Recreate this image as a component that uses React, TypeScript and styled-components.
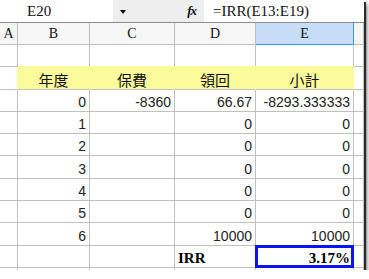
import React from "react";
import styled, { createGlobalStyle, css } from "styled-components";

const GlobalStyle = createGlobalStyle`
  html, body {
    margin: 0;
    padding: 0;
    background: #ffffff;
  }
`;

const GRID = "#c0c0c0";
const YELLOW = "#fbfb9c";
const SERIF = `"Liberation Serif", "DejaVu Serif", "Times New Roman", serif`;

const Frame = styled.div`
  width: 364px;
  height: 270px;
  overflow: hidden;
  display: flex;
  flex-direction: column;
  background: #fff;
  box-shadow: 2px 2px 1px rgba(0, 0, 0, 0.75), 4px 4px 4px rgba(0, 0, 0, 0.35);
`;

// formula bar
const FormulaBar = styled.div`
  display: flex;
  height: 22px;
  flex: none;
  border-bottom: 1px solid #8c8c8c;
  font-family: ${SERIF};
  font-size: 15px;
  color: #111;
`;

const NameBox = styled.div`
  width: 86px;
  padding-left: 27px;
  display: flex;
  align-items: center;
  background: #fff;
`;

const ToolStrip = styled.div`
  width: 91px;
  display: flex;
  align-items: center;
  background: #eeeeee;
  padding-left: 7px;
  box-sizing: border-box;
`;

const DropArrow = styled.span`
  width: 0;
  height: 0;
  border-left: 3.5px solid transparent;
  border-right: 3.5px solid transparent;
  border-top: 4px solid #000;
  margin-top: 1px;
`;

const Fx = styled.span`
  margin-left: auto;
  margin-right: 8px;
  font-style: italic;
  font-weight: bold;
  font-size: 13px;
  letter-spacing: -1px;
`;

const FormulaInput = styled.div`
  flex: 1;
  display: flex;
  align-items: center;
  padding-left: 9px;
  background: #fff;
`;

// sheet
const Sheet = styled.div`
  flex: 1;
  display: grid;
  grid-template-columns: 18px 72px 85px 81px 98px 10px;
  grid-template-rows: 22px repeat(10, 22.3px) 1fr;
`;

const ColHead = styled.div<{ $active?: boolean }>`
  display: flex;
  align-items: center;
  justify-content: center;
  box-sizing: border-box;
  background: #f6f6f6;
  border-right: 1px solid ${GRID};
  border-bottom: 1px solid ${GRID};
  font-family: ${SERIF};
  font-size: 14px;
  color: #111;
  ${(p) =>
    p.$active &&
    css`
      background: #c6ddf7;
      border-right-color: #3d95f5;
      border-bottom-color: #3d95f5;
    `}
`;

type Align = "left" | "right" | "center";
type Font = "num" | "cjk" | "serif";

const fonts: Record<Font, ReturnType<typeof css>> = {
  num: css`
    font-family: "Liberation Sans", Arial, sans-serif;
    font-size: 14px;
    color: #222;
  `,
  cjk: css`
    font-family: "Noto Sans CJK TC", "Noto Sans CJK SC", sans-serif;
    font-size: 15px;
    color: #111;
  `,
  serif: css`
    font-family: ${SERIF};
    font-size: 15px;
    font-weight: bold;
    color: #000;
  `,
};

const Cell = styled.div<{ $align?: Align; $fill?: string; $font?: Font; $selected?: boolean }>`
  position: relative;
  display: flex;
  align-items: flex-end;
  justify-content: ${(p) =>
    p.$align === "right" ? "flex-end" : p.$align === "center" ? "center" : "flex-start"};
  box-sizing: border-box;
  padding: 0 3px 1px 3px;
  border-right: 1px solid ${GRID};
  border-bottom: 1px solid ${GRID};
  line-height: 16px;
  white-space: nowrap;
  ${(p) => fonts[p.$font ?? "num"]}
  ${(p) =>
    p.$fill &&
    css`
      background: ${p.$fill};
      border-right-color: ${p.$fill};
      box-shadow: -1px 0 0 ${p.$fill}, 0 -1px 0 ${p.$fill};
    `}
  ${(p) =>
    p.$selected &&
    css`
      &::after {
        content: "";
        position: absolute;
        top: -1px;
        left: -1px;
        right: -1px;
        bottom: -1px;
        border: 3px solid #0a14f0;
      }
    `}
`;

const TailCell = styled.div`
  box-sizing: border-box;
  border-right: 1px solid ${GRID};
`;

const cols = ["A", "B", "C", "D", "E"];

const values: string[][] = [
  ["0", "-8360", "66.67", "-8293.333333"],
  ["1", "", "0", "0"],
  ["2", "", "0", "0"],
  ["3", "", "0", "0"],
  ["4", "", "0", "0"],
  ["5", "", "0", "0"],
  ["6", "", "10000", "10000"],
];

const titles = ["年度", "保費", "領回", "小計"];

export default function App() {
  return (
    <>
      <GlobalStyle />
      <Frame>
        <FormulaBar>
          <NameBox>E20</NameBox>
          <ToolStrip>
            <DropArrow />
            <Fx>fx</Fx>
          </ToolStrip>
          <FormulaInput>=IRR(E13:E19)</FormulaInput>
        </FormulaBar>

        <Sheet>
          {cols.map((c) => (
            <ColHead key={c} $active={c === "E"}>
              {c}
            </ColHead>
          ))}
          <ColHead />

          {/* blank row */}
          {cols.map((c) => (
            <Cell key={"blank" + c} />
          ))}
          <Cell />

          {/* yellow titles */}
          <Cell />
          {titles.map((t) => (
            <Cell key={t} $align="center" $font="cjk" $fill={YELLOW}>
              {t}
            </Cell>
          ))}
          <Cell />

          {values.map((row, i) => (
            <React.Fragment key={i}>
              <Cell />
              {row.map((v, j) => (
                <Cell key={j} $align="right">
                  {v}
                </Cell>
              ))}
              <Cell />
            </React.Fragment>
          ))}

          {/* IRR row */}
          <Cell />
          <Cell />
          <Cell />
          <Cell $font="serif">IRR</Cell>
          <Cell $font="serif" $align="right" $selected>
            3.17%
          </Cell>
          <Cell />

          {cols.map((c) => (
            <TailCell key={"tail" + c} />
          ))}
          <TailCell />
        </Sheet>
      </Frame>
    </>
  );
}
